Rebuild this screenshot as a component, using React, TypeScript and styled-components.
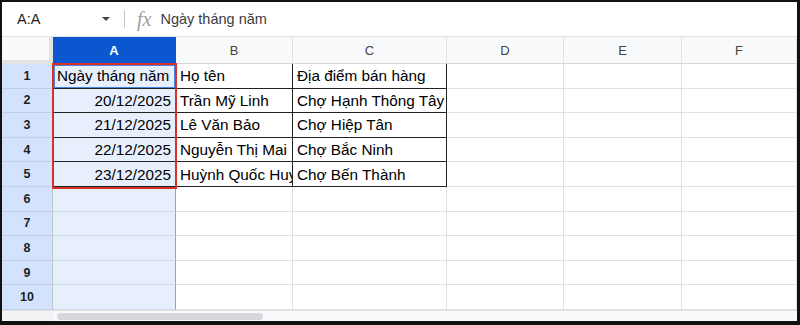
import React from 'react'
import styled, { createGlobalStyle } from 'styled-components'

const GlobalStyle = createGlobalStyle`
  body {
    margin: 0;
    font-family: "Liberation Sans", Arial, sans-serif;
    background: #fff;
  }
`

const columns = ['A', 'B', 'C', 'D', 'E', 'F']
const rows: string[][] = [
  ['Ngày tháng năm', 'Họ tên', 'Địa điểm bán hàng'],
  ['20/12/2025', 'Trần Mỹ Linh', 'Chợ Hạnh Thông Tây'],
  ['21/12/2025', 'Lê Văn Bảo', 'Chợ Hiệp Tân'],
  ['22/12/2025', 'Nguyễn Thị Mai', 'Chợ Bắc Ninh'],
  ['23/12/2025', 'Huỳnh Quốc Huy', 'Chợ Bến Thành'],
]

const Frame = styled.div`
  width: 800px;
  height: 325px;
  box-sizing: border-box;
  border-style: solid;
  border-color: #111;
  border-width: 2px 3px 4px 2px;
  display: flex;
  flex-direction: column;
  background: #fff;
  overflow: hidden;
`

const Toolbar = styled.div`
  height: 35px;
  flex-shrink: 0;
  box-sizing: border-box;
  border-bottom: 1px solid #e1e3e1;
  display: flex;
  align-items: center;
  padding-left: 15px;
`

const NameBox = styled.div`
  width: 95px;
  display: flex;
  align-items: center;
  justify-content: space-between;
  font-size: 14.5px;
  color: #1f1f1f;
`

const Caret = styled.span`
  width: 0;
  height: 0;
  border-left: 4px solid transparent;
  border-right: 4px solid transparent;
  border-top: 4px solid #444;
  margin-right: 2px;
`

const Divider = styled.div`
  width: 1px;
  height: 18px;
  background: #c7c7c7;
  margin: 0 12px 0 12px;
`

const Fx = styled.span`
  font-family: "Liberation Serif", serif;
  font-style: italic;
  font-size: 20px;
  color: #a0a0a0;
  letter-spacing: 0;
  margin-right: 9px;
`

const Formula = styled.span`
  font-size: 14.5px;
  color: #3c3c3c;
`

const Sheet = styled.div`
  position: relative;
  display: grid;
  grid-template-columns: 51px 123px 117px 154px 117px 118px 115px;
  grid-template-rows: 27px repeat(10, 24.6px);
`

const Corner = styled.div`
  background: #f8f9fa;
  box-sizing: border-box;
  border-right: 4px solid #e3e3e3;
  border-bottom: 4px solid #e3e3e3;
`

const ColHead = styled.div<{ $active?: boolean }>`
  box-sizing: border-box;
  display: flex;
  align-items: center;
  justify-content: center;
  font-size: 13px;
  background: ${(p) => (p.$active ? '#0b57d0' : '#f8f9fa')};
  color: ${(p) => (p.$active ? '#fff' : '#444')};
  font-weight: ${(p) => (p.$active ? 700 : 400)};
  border-right: 1px solid ${(p) => (p.$active ? '#0b57d0' : '#e1e1e1')};
  border-bottom: 1px solid #d6d6d6;
`

const RowHead = styled.div`
  box-sizing: border-box;
  display: flex;
  align-items: center;
  justify-content: center;
  background: #d3e3fd;
  color: #1f1f1f;
  font-size: 12.5px;
  font-weight: 700;
  border-right: 1px solid #c4c7c5;
  border-bottom: 1px solid #c2cfe3;
`

const Cell = styled.div<{
  $right?: boolean
  $selected?: boolean
  $ruled?: boolean
}>`
  box-sizing: border-box;
  display: flex;
  align-items: center;
  justify-content: ${(p) => (p.$right ? 'flex-end' : 'flex-start')};
  padding: 1px 4px 0 4px;
  overflow: hidden;
  white-space: nowrap;
  font-size: 15.3px;
  color: #000;
  background: ${(p) => (p.$selected ? '#e7effc' : '#fff')};
  border-right: 1px solid
    ${(p) => (p.$ruled ? '#222' : p.$selected ? '#7fa7e8' : '#e1e1e1')};
  border-bottom: 1px solid
    ${(p) => (p.$ruled ? '#222' : p.$selected ? '#d0d9e8' : '#e1e1e1')};
`

const SelectionBox = styled.div`
  position: absolute;
  left: 50px;
  top: 26px;
  width: 125px;
  height: 126px;
  box-sizing: border-box;
  border: 2px solid #d93025;
  pointer-events: none;
`

const ActiveCell = styled.div`
  position: absolute;
  left: 52px;
  top: 28px;
  width: 121px;
  height: 23px;
  box-sizing: border-box;
  border: 1px solid #4a86e8;
  pointer-events: none;
`

const ScrollRow = styled.div`
  flex: 1;
  display: flex;
  background: #f8f9fa;
  border-top: 1px solid #e1e1e1;
`

const ScrollGutter = styled.div`
  width: 51px;
  background: #f1f3f4;
`

const Thumb = styled.div`
  margin: 2px 0 0 4px;
  width: 206px;
  height: 7px;
  border-radius: 4px;
  background: #d5d7da;
`

const App: React.FC = () => {
  return (
    <>
      <GlobalStyle />
      <Frame>
        <Toolbar>
          <NameBox>
            A:A
            <Caret />
          </NameBox>
          <Divider />
          <Fx>fx</Fx>
          <Formula>Ngày tháng năm</Formula>
        </Toolbar>
        <Sheet>
          <Corner />
          {columns.map((c) => (
            <ColHead key={c} $active={c === 'A'}>
              {c}
            </ColHead>
          ))}
          {Array.from({ length: 10 }).map((_, r) => (
            <React.Fragment key={r}>
              <RowHead>{r + 1}</RowHead>
              {columns.map((c, ci) => {
                const value = rows[r]?.[ci] ?? ''
                const inData = r < rows.length && ci < 3
                return (
                  <Cell
                    key={c}
                    $selected={ci === 0}
                    $ruled={inData}
                    $right={ci === 0 && r > 0}
                  >
                    {value}
                  </Cell>
                )
              })}
            </React.Fragment>
          ))}
          <SelectionBox />
          <ActiveCell />
        </Sheet>
        <ScrollRow>
          <ScrollGutter />
          <Thumb />
        </ScrollRow>
      </Frame>
    </>
  )
}

export default App
